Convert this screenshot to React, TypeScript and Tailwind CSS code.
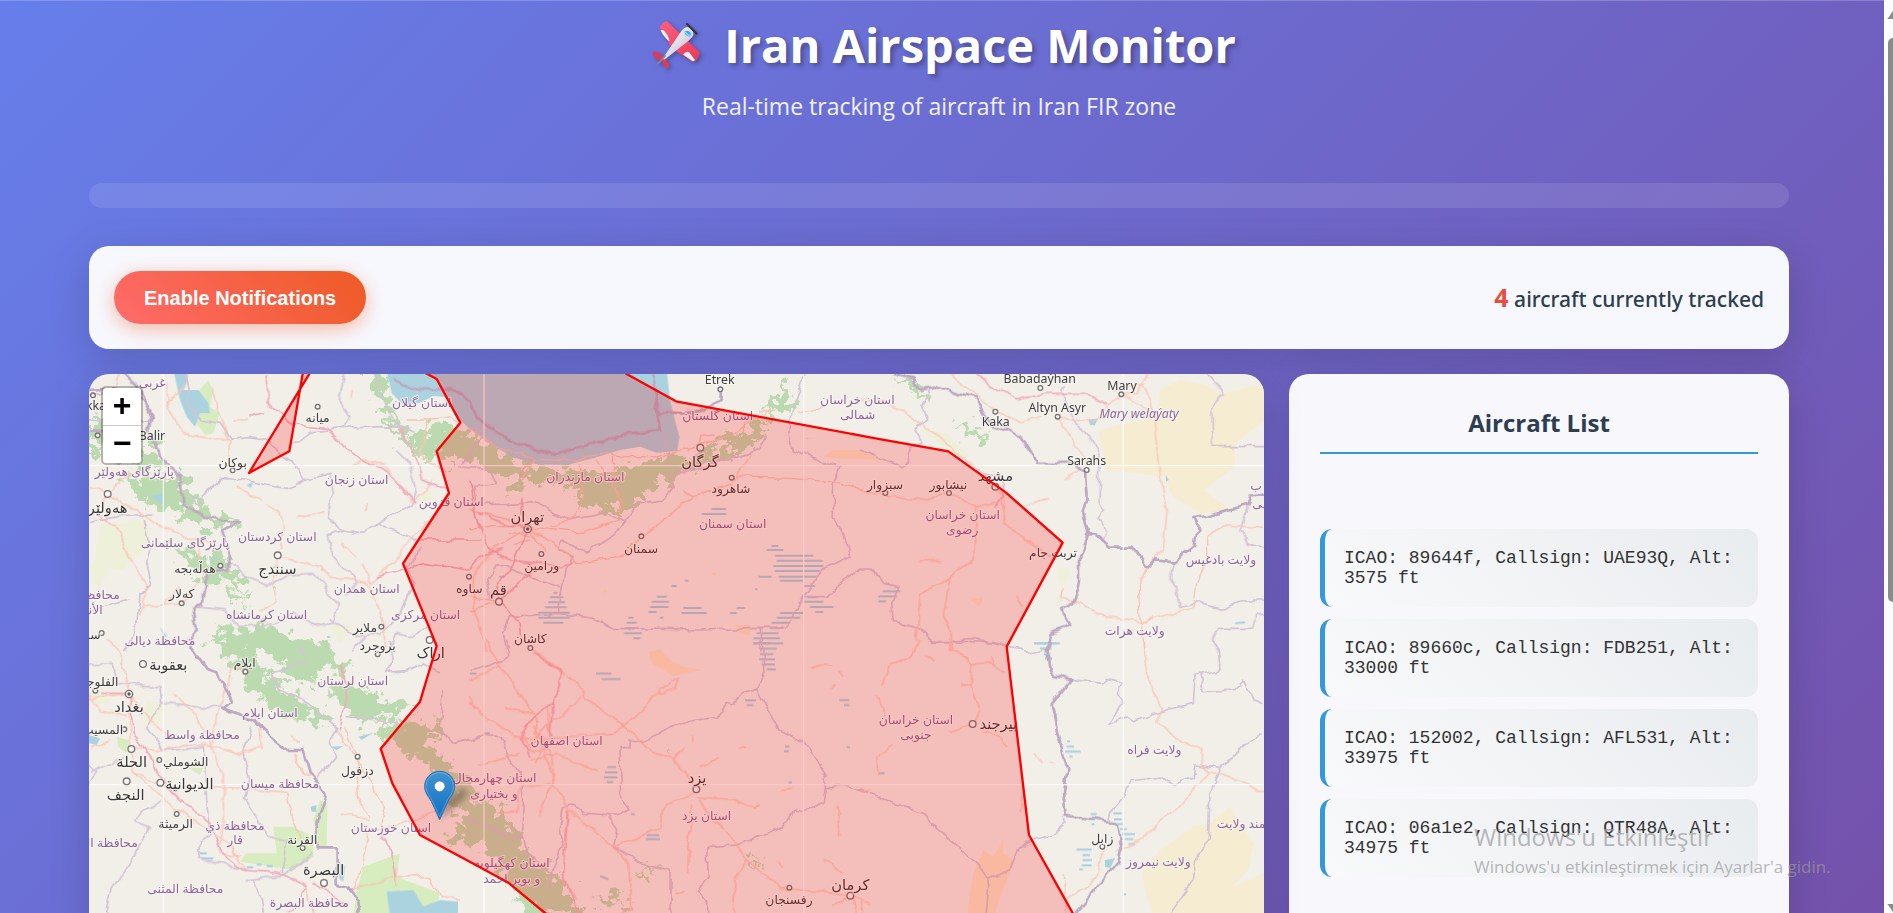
import React from "react";

type Sheet = "nw" | "sw" | "n" | "s" | "ne" | "se";
type Shape = [Sheet, string];
type Label = [Sheet, number, number, string];

/* The map is drawn as six survey sheets; each has its own origin. */
const ORIGIN: Record<Sheet, [number, number]> = {
  nw: [-27, -12],
  sw: [-27, 798],
  n: [1143, -12],
  s: [1143, 798],
  ne: [2313, -12],
  se: [2313, 798],
};

const WATER: Shape[] = [
  ["n", "M-250,0 L-235,70 -200,105 -150,98 -110,78 -65,82 -40,140 0,178 60,222 130,262 200,283 290,285 370,265 450,240 510,230 560,248 622,243 628,200 612,140 600,90 590,0Z"],
  ["nw", "M280,0 L325,0 320,40 310,60 355,60 385,100 390,130 360,130 345,170 320,140 300,90Z"],
  ["nw", "M212,378 L250,370 250,405Z M395,565 L410,560 400,578Z M240,770 L262,800 250,800Z M500,345 L520,335 512,355Z"],
  ["sw", "M27,285 L60,295 50,315 27,310Z M692,500 L710,495 708,515 695,515Z M750,320 L790,318 770,330Z M835,290 L880,278 845,300Z M315,240 L340,245Z"],
  ["sw", "M920,755 L1000,750 1030,800 1080,780 1135,785 1135,830 930,830Z M780,670 L795,680 790,725 778,715Z"],
  ["ne", "M685,148 L712,146 705,166 690,165Z M918,315 L926,330 918,335Z"],
  ["se", "M735,660 L765,655 750,685 735,680Z"],
];

const FOREST: Shape[] = [
  ["nw", "M860,0 L915,0 925,80 940,140 985,200 1060,160 1130,170 1200,200 1200,270 1130,275 1070,250 1040,262 1010,255 985,230 930,160 890,90Z"],
  ["n", "M-60,195 L0,205 60,235 130,270 200,290 290,292 360,300 460,300 520,270 640,262 740,230 800,205 860,160 910,150 870,195 830,235 740,265 680,290 590,330 540,365 500,400 450,435 400,415 310,390 320,360 220,325 130,360 120,320 50,300 20,250Z"],
  ["n", "M870,130 L900,110 910,80 950,50 960,90 975,120 940,140Z M905,75 L930,65 940,75Z"],
  ["ne", "M110,20 L160,30 190,70 210,110 180,90 150,50Z M290,160 L330,170 400,205 350,200 310,190Z"],
  ["nw", "M130,318 L200,330 290,318 350,370 370,420 480,455 430,480 340,465 270,420 200,400 150,355Z"],
  ["nw", "M270,520 L330,535 370,575 420,540 455,580 440,615 390,640 350,600 300,560Z M410,600 L470,610 510,665 480,660Z M440,660 L480,680 500,720 460,700Z"],
  ["nw", "M420,770 L560,770 640,800 750,810 750,850 440,850Z M560,620 L590,610 580,640Z"],
  ["nw", "M27,150 L90,135 110,200 150,240 240,260 250,290 200,310 100,250 27,235Z M190,200 L240,190 230,240Z"],
  ["sw", "M380,0 L460,10 540,60 560,110 630,160 760,230 750,255 680,235 640,245 570,190 500,130 450,60Z"],
  ["sw", "M570,0 L680,5 740,20 800,70 835,95 780,110 730,80 690,130 600,95Z"],
  ["sw", "M730,130 L800,150 870,150 990,205 960,235 900,225 870,250 820,225 770,180Z"],
  ["sw", "M880,245 L960,250 1060,235 1080,290 1030,285 1110,370 1180,440 1200,500 1240,620 1110,610 1100,580 1160,560 1100,450 1050,380 940,310Z"],
  ["s", "M0,480 L80,490 110,560 140,570 160,640 260,700 300,760 330,830 200,830 120,740 60,650 0,600Z M590,310 L615,330 600,330Z M830,640 L870,680 860,685Z M370,770 L430,760 480,800 400,790Z M500,680 L550,685 560,695 520,695Z"],
];

const MEADOW: Shape[] = [
  ["nw", "M350,70 L385,30 400,60 390,110 420,130 400,190 375,195 350,160Z"],
  ["sw", "M720,480 L742,490 740,620 715,620 700,540Z M580,560 L640,560 700,590 700,650 640,690 480,665 500,640 590,640Z M850,680 L960,640 950,710 1080,760 1060,830 820,830 830,750Z M320,380 L370,385 360,405Z M110,290 L145,300 140,340 115,320Z"],
];

const FARM: Shape[] = [
  ["nw", "M60,470 L200,450 210,520 130,600 40,590Z M30,580 L90,600 60,650 30,640Z M740,760 L820,770 780,820Z M1010,380 L1060,360 1050,420Z"],
  ["sw", "M200,180 L250,190 240,250 190,260Z M27,150 L100,170 80,190 27,190Z"],
  ["ne", "M590,590 L630,600 620,640 600,640Z M180,180 L260,190 330,260 300,260Z M590,670 L610,690 590,710Z"],
];

const DESERT: Shape[] = [
  ["ne", "M900,60 L960,30 1040,45 1080,70 1230,40 1230,140 1125,220 1125,290 1030,360 1120,425 1020,430 940,380 910,320 740,300 715,180 890,140Z"],
  ["se", "M845,700 L900,630 1000,560 1050,550 1110,500 1140,550 1180,610 1165,690 1120,740 1230,690 1230,830 885,830 860,770Z"],
];

const SAND: Shape[] = [
  ["s", "M535,35 L570,28 600,60 640,80 700,90 610,108 545,70Z"],
  ["se", "M370,630 L400,650 430,600 430,640 460,660 440,720 400,830 320,830 340,700Z"],
  ["n", "M795,765 L840,765 840,795 800,790Z M720,610 L738,608 735,620Z M400,660 L412,662 405,672Z M1060,260 L1090,240 1160,240 1250,270 1090,265Z"],
  ["ne", "M330,690 L370,680 360,710Z"],
];

const SALT: Shape[] = [
  ["n", "M725,417H768M695,432H768M890,540H940M905,528H925M915,557H1030M920,572H1058M910,588H1060M915,603H1050M865,620H905M925,620H1040M930,632H1000M1000,648H1035M560,680H590M545,695H597M540,711H595M535,726H560M640,714H695M635,729H710M780,729H800M800,714H825M88,620H104M250,668H262M240,682H280M235,697H285M225,712H290M205,728H300M205,743H300M220,758H280M475,743H490M470,758H500M465,774H505M462,790H515M490,805H512M930,729H1000M920,743H990M905,758H960M900,774H940M860,790H925M850,805H930M850,820H900M1010,682H1040M1000,695H1060M1020,711H1090M1035,726H1060M855,658H862M605,648H620M645,632H655M570,743H580"],
  ["s", "M850,10H940M870,26H920M870,42H910M868,58H915M875,73H915M890,88H918M378,101H425M395,117H452M825,181H858M830,195H850M1108,180H1138M1122,195H1138M412,381H438M405,397H442M402,412H442M410,426H430M530,585H568M528,597H570M945,320H958M942,334H956M483,522H494M955,428H966M1130,321H1140M390,708L415,718M40,280H60M0,101H20"],
  ["ne", "M68,664H120M55,679H110M55,694H78M525,820H600M1125,760L1155,757"],
  ["se", "M522,10H590M540,26H575M552,42H570M555,56H575M622,304H630M620,320H642M615,335H662M628,350H638M692,522H710M688,538H705M695,553H703M760,520H785M762,538H785M760,552H790M780,567H800M785,582H825M795,597H820M805,612H825M650,629H695M668,645H690M668,660H696M665,676H695M658,688H668M57,399H74M790,763H798"],
  ["sw", "M360,640H380M365,655H400M500,682H520M560,678H578M530,674H545"],
];

const BORDER: Shape[] = [
  ["nw", "M120,0 L170,50 215,140 205,180 225,235 265,285 300,320 310,400 370,440 480,455 425,485 455,560 440,600 380,610 380,650 370,705 340,712 350,780 325,815"],
  ["nw", "M27,60 L100,55 150,70 190,95 215,150 M27,180 L80,185"],
  ["sw", "M325,10 L380,90 415,100 455,185 430,205 520,240 560,280 620,330 670,330 690,400 740,465 710,540 710,625 770,625 770,730 800,740 835,785 840,830"],
  ["n", "M-230,20 L-190,50 -120,60 -60,55 0,90 20,140 60,175 130,215 200,240 260,250 370,220 420,210 480,190 570,180 560,110 545,0 M565,125 L640,130 700,120 755,90 755,60"],
  ["ne", "M100,12 L160,25 180,60 220,50 350,85 370,130 400,170 440,175 485,200 530,278 640,278 675,310 680,380 668,420 685,490 660,560 660,640 640,700 600,720 625,765 570,790 560,850"],
  ["ne", "M685,490 L705,490 750,530 820,530 865,590 890,568 940,575 1000,530 1005,500 1025,480 1005,445 1080,425 1165,405 1175,380 1225,370"],
  ["se", "M562,0 L570,75 585,108 630,118 575,190 595,290 622,385 612,460 620,530 770,550 785,630 775,665 640,830"],
];

const PROVINCE: Shape[] = [
  ["nw", "M315,12 L330,100 360,150 420,160 450,205 510,200 570,210 600,260 640,280 670,330 620,355 550,345 500,330 420,325 350,400 330,380"],
  ["nw", "M790,12 L775,90 810,140 790,175 700,185 640,220 625,240 M790,175 L900,170 960,175 1010,190 M960,175 L910,100 885,12"],
  ["nw", "M670,330 L750,310 760,370 740,440 790,480 850,490 890,465 1000,400 1010,360 990,280 950,240 M890,465 L950,480 1010,510 1000,540 M790,480 L745,500 760,560 800,600 830,640 800,670"],
  ["nw", "M455,580 L500,620 560,650 620,615 700,610 730,640 750,680 775,700 760,760 700,770 640,720 590,760 480,770 430,720 350,710"],
  ["nw", "M27,150 L120,160 215,150 M27,460 L130,440 220,435 M190,450 L210,530 200,580 215,640 180,680 170,760 160,800 130,840 M27,720 L150,690 M27,80 L90,60"],
  ["nw", "M750,750 L830,800 900,790 960,730 1000,640 980,590 1030,530 M820,840 L860,800 M930,840 L950,790 990,800 1050,760"],
  ["sw", "M27,75 L100,70 110,130 240,140 245,190 340,200 430,200 M245,190 L200,260 250,330 370,320 380,480 390,590 360,610 360,655 500,690 M515,255 L490,340 510,420 490,470 560,590 620,600 610,700 M27,430 L50,400 27,370 M30,400 L130,350"],
  ["sw", "M240,480 L160,540 210,560 130,700 95,740 75,819 M520,720 L545,780 550,819 M500,720 L610,705 700,640"],
  ["sw", "M570,100 L630,90 680,60 660,20 M570,100 L600,150 680,190 770,260 750,300 770,350 710,415 M800,230 L900,240 960,250 M930,0 L940,60 920,100 980,95 1030,70 1080,100 M1090,150 L1080,270 1120,310 1200,290"],
  ["n", "M0,180 L50,175 -30,290 60,300 80,340 10,350 20,400 110,400 200,395 250,430 300,450 400,430 470,450 440,490 350,550 310,530 275,510 265,540 310,560 285,600 265,730 M80,580 L180,620 270,650 M80,580 L50,630 60,690 M265,730 L120,740 100,790 110,840 M265,730 L370,745 430,775 680,780 870,775 945,775 1000,680 1060,600 1140,560 1120,490 1090,440 1090,340 1110,290 1060,275 970,240 960,190 965,130 1005,12"],
  ["n", "M595,265 L590,190 M600,320 L700,290 870,235 890,190 M600,320 L610,350 580,390 540,395 500,405 460,460 M875,775 L873,840 M1000,680 L1070,680 1110,640 1170,600"],
  ["s", "M880,0 L885,100 860,148 930,270 1000,305 1070,405 1060,485 1000,515 970,510 940,560 800,615 710,620 715,710 685,750 710,780 710,830 M860,148 L820,160 790,195 770,190 740,230 660,240 520,305 480,300 480,320 450,320 455,470 480,510 440,525 340,520 310,495 280,500 270,560 280,620 240,700 240,750 M415,525 L440,570 430,620 520,670 600,690 600,790 610,830"],
  ["s", "M0,300 L30,285 90,290 110,350 150,400 160,480 155,580 170,640 240,700 M110,0 L120,50 60,80 0,95 M0,540 L60,560 110,590 160,590 M1065,440 L1130,440 1190,460"],
  ["ne", "M205,60 L185,110 200,150 165,180 185,215 150,230 145,280 125,290 0,240 M0,600 L40,600 65,640 120,650 95,700 100,755 175,770 220,815 340,805 440,830"],
  ["ne", "M620,50 L605,60 640,150 690,200 720,260 717,400 730,420 710,445 740,480 730,510 M1040,12 L1093,75 1055,120 1060,230 1225,230 M940,575 L930,620 950,650 960,710 1010,695 1090,715 1150,690 1225,690 M1165,410 L1140,480 1160,520 1225,530 M1225,730 L1190,735 1180,775 1070,775 1055,810 1075,850"],
  ["se", "M210,0 L400,8 440,20 485,25 495,40 560,30 M630,118 L720,130 740,115 790,128 770,160 785,190 745,250 800,230 820,245 920,210 1000,190 1005,105 1080,90 1075,30 1055,0 M1020,105 L1030,155 1120,150 1150,120 1180,180 1212,195 M1212,280 L1150,320 1080,385 1005,375 1000,410 940,435 905,408 810,420 795,470 755,515 750,545 M1080,385 L1050,460 1045,600 1010,640 1000,720 930,819 M0,450 L90,485 190,520 230,565 350,670 385,718 375,830 M385,718 L450,690 475,625 520,600 580,580 615,550 612,530"],
];

const TRUNK: Shape[] = [
  ["nw", "M320,40 L260,100 310,190 400,210 450,210 450,270 M400,50 L410,110 430,160 440,210 M460,150 L500,150 M260,40 L265,110 M470,350 L540,390 M560,400 L600,430 610,470 600,540 M660,445 L730,425 M820,290 L850,265 920,290 980,370 1000,400 1060,330 M860,400 V425"],
  ["nw", "M595,560 L720,590 740,615 M595,560 L580,640 590,700 545,720 M780,520 L830,560 M850,580 L870,640 950,570 1000,490 1060,450 M860,640 L740,620 M860,640 L910,750 920,830 M720,600 L745,615 M250,700 L300,650"],
  ["nw", "M150,320 L100,345 83,370 150,410 210,450 250,470 310,500 400,520 M83,370 L60,440 120,480 140,540 200,640 180,740 M83,370 L30,350 M350,510 L370,610 310,700 190,710 M120,0 L100,90 40,110 M815,60 L810,80"],
  ["nw", "M1040,150 L980,150 M1040,150 L1110,140 1140,160 M1040,150 L1020,250 1100,310 M1110,370 L1080,350"],
  ["sw", "M147,160 L120,40 80,0 M147,160 L200,230 280,300 M27,175 L147,160 150,300 160,400 280,500 370,560 450,610 M90,300 L30,330 M150,320 L250,330 320,310 395,320 480,340 545,320 M395,320 L430,400 430,540 420,640 480,650 M280,160 L350,230 395,320 420,200 455,80 500,95 M160,400 L250,440 380,440 500,450 620,460 M540,260 L545,330 M30,160 L60,210 140,230"],
  ["sw", "M620,460 L640,540 665,600 M630,290 L660,310 M640,340 L670,400 700,410 M680,740 L700,819 M790,260 L830,350 835,470 870,530 M770,270 L870,420 910,500 900,550 M780,520 L870,540 M870,580 L850,680 815,750 950,710 1050,710 1080,770 1140,780 M950,680 L950,740 M860,560 L870,580 1080,510 M450,610 L460,640 500,690"],
  ["n", "M0,178 L100,240 200,265 320,270 400,250 470,260 560,260 690,225 780,200 830,160 920,115 M200,265 L155,330 M330,280 L340,380 320,440 250,470 M430,260 L430,350 460,400 440,440 M380,270 L400,310 M690,230 L695,200 730,195 M870,120 L900,130 M820,155 V190"],
  ["n", "M0,470 L173,470 340,490 450,445 M173,470 L260,530 320,575 450,560 514,499 670,380 785,345 840,250 M785,320 L960,325 1080,335 1200,365 M173,477 L60,545 10,620 10,720 50,840 M173,477 L120,450 0,420 M173,477 L230,540 M87,695 L0,720 M0,680 L87,695 M640,355 L670,380 M1010,205 L1030,205 M985,130 L1060,110 M120,490 L200,500 M130,520 L180,510"],
  ["s", "M50,0 L90,80 190,220 250,430 300,510 430,620 480,670 485,800 450,830 M180,25 L280,95 340,150 350,180 460,255 550,335 610,360 679,448 M0,120 L90,80 M0,190 L130,290 200,300 350,285 430,280 460,255 570,155 M340,170 L250,240 190,300 M190,220 L100,205 M570,150 L625,115 615,145 575,160Z M150,340 L50,370 20,370 M180,360 L260,340 380,395 M0,170 L20,215"],
  ["s", "M679,448 L620,485 580,500 570,560 490,600 430,620 M679,470 L800,480 850,505 870,490 M690,470 L720,530 780,590 830,655 930,745 1050,755 1141,767 1200,790 M665,500 L655,640 653,700 M830,655 L795,720 790,819 M610,360 L640,320 M670,285 L665,305 M690,380 L745,350 M800,330 L830,320 M1020,85 L1050,75 1090,78 M1080,145 L1095,130 M930,455 L965,450 M1105,500 L1100,585 M1060,655 L1120,700 M250,430 L150,445 M250,430 L205,530 M300,510 L280,620 M280,720 L320,780 M615,763 H645 M1141,767 L1090,800 M1141,767 L1160,819"],
  ["s", "M190,230 L160,280 180,330 240,330 250,430 M230,190 L240,290 M190,260 L220,290 200,370 M200,240 V300 M80,520 L140,515 150,450 M1105,95 L1120,110 M930,660 L940,680"],
  ["ne", "M0,90 L80,95 180,160 240,200 300,260 380,320 430,380 430,460 570,560 M0,360 L150,390 190,390 265,370 350,410 410,400 M350,410 L345,570 270,620 180,670 170,819 M270,620 L250,740 270,780 275,850 M265,0 L350,80 410,125 480,155 540,140 M593,140 L660,155 720,140 784,73 830,70 870,0 M784,73 L880,130 895,280 920,430 910,540 880,570 M593,140 L680,280 620,330 M760,60 L850,40 890,150 M500,405 L560,385 M180,572 H240 M470,680 L490,710"],
  ["ne", "M610,655 L605,680 740,740 850,755 1000,710 1010,640 1040,560 M880,570 L835,650 840,740 850,755 855,850 M1040,560 L1040,500 1100,465 1160,470 1212,475 M850,755 L880,740"],
  ["se", "M180,0 L150,50 95,70 62,135 M270,0 L280,35 340,72 390,68 440,95 M335,72 L330,140 350,190 352,260 338,252 M300,130 L330,138 M338,252 L270,275 M370,270 L430,295 440,315 M50,165 L75,200 75,230 M98,310 L50,355 55,405 M0,455 L35,450 M195,45 L220,60 M390,50 L398,70 M480,465 L485,520 M852,0 L865,120 905,210 890,245 950,300 1022,320 1020,375 1050,395 1150,425 1212,455 M1050,395 L1000,450 930,520 840,600 770,640 M727,625 L710,700 680,740 620,780 M610,700 L620,819 M525,340 L550,368 M575,368 L585,374 M0,780 L10,810"],
];

const MOTORWAY: Shape[] = [
  ["nw", "M555,12 L570,110 640,165 740,175 800,235 850,270 920,300 980,370 1010,400 M505,140 L555,128 M960,180 L1010,270 1025,330 1100,360 M890,620 L960,600 M960,600 L1030,580 1170,600 M1020,510 L1200,510"],
  ["sw", "M790,80 L800,180 775,265 M60,160 L147,160 160,280 220,360 240,410 300,480 390,550 430,640 490,690 600,700 680,740 660,790 620,819 M900,590 L920,600 940,660 950,720 M700,730 L790,790"],
  ["n", "M30,430 L110,465 173,477 M173,477 L120,600 80,640 87,695 M87,695 L190,600 173,580 M87,695 L150,760 155,800 M0,600 L30,560 100,540 M0,330 L20,440 60,540 120,570 270,590 310,575 M155,310 L180,265 M155,380 L160,440"],
  ["s", "M190,40 L275,95 270,140 250,180 240,290 M250,185 L180,240 155,295 180,350 M295,510 L290,600 280,700 300,760 330,819"],
  ["ne", "M350,12 L400,55 470,90 560,70 670,70 745,105 M370,310 L420,320 430,380 410,410"],
];

const PROVINCE_LABELS: Label[] = [
  ["nw", 217, 37, "غربی"], ["nw", 163, 305, "پارێزگای هەولێر"], ["nw", 830, 328, "استان زنجان"],
  ["nw", 1114, 395, "استان قزوین"], ["nw", 592, 500, "استان کردستان"], ["nw", 315, 518, "پارێزگای سلێمانی"],
  ["nw", 860, 655, "استان همدان"], ["nw", 560, 733, "استان کرمانشاه"], ["nw", 1037, 733, "استان مرکزی"],
  ["nw", 240, 812, "محافظة ديالى"], ["nw", 58, 675, "محافظة"], ["nw", 27, 718, "الأنبار"], ["nw", 1025, 97, "استان گیلان"],
  ["sw", 818, 121, "استان لرستان"], ["sw", 570, 218, "استان ایلام"], ["sw", 366, 284, "محافظة واسط"],
  ["sw", 600, 432, "محافظة ميسان"], ["sw", 465, 556, "محافظة ذي"], ["sw", 465, 600, "قار"],
  ["sw", 933, 562, "استان خوزستان"], ["sw", 316, 746, "محافظة المثنى"], ["sw", 688, 788, "محافظة البصرة"],
  ["sw", 60, 607, "محافظة النجف"],
  ["n", 743, 137, "استان گلستان"], ["n", 1162, 90, "استان خراسان"], ["n", 1163, 135, "شمالی"],
  ["n", 346, 321, "استان مازندران"], ["n", 788, 460, "استان سمنان"],
  ["s", 290, 302, "استان اصفهان"], ["s", 74, 414, "استان چهارمحال"], ["s", 72, 461, "و بختیاری"],
  ["s", 710, 528, "استان یزد"], ["s", 125, 669, "استان کهگیلویه"], ["s", 125, 716, "و بویر احمد"],
  ["ne", 308, 433, "استان خراسان"], ["ne", 307, 480, "رضوی"], ["ne", 1083, 570, "ولایت بادغیس"],
  ["ne", 824, 781, "ولایت هرات"], ["ne", 1200, 348, "ب /"], ["ne", 1208, 400, "سی"],
  ["se", 168, 238, "استان خراسان"], ["se", 168, 284, "جنوبی"], ["se", 883, 329, "ولایت فراه"],
  ["se", 895, 665, "ولایت نیمروز"], ["se", 1160, 550, "هلمند ولایت"],
];

const TOWN_LABELS: Label[] = [
  ["nw", 713, 142, "ميانه"], ["nw", 458, 278, "بوکان"], ["nw", 345, 596, "هەڵەبجە"], ["nw", 305, 672, "کەلار"],
  ["nw", 855, 773, "ملایر"], ["nw", 893, 827, "بروجرد"], ["nw", 36, 795, "سر"], ["nw", 1168, 655, "ساوه"],
  ["nw", 48, 108, "kka"], ["nw", 216, 196, "Balir"],
  ["sw", 494, 68, "ایلام"], ["sw", 58, 125, "الفلوجة"], ["sw", 68, 270, "المسيب"], ["sw", 317, 364, "الشوملي"],
  ["sw", 287, 552, "الرميثة"], ["sw", 667, 598, "القرنة"], ["sw", 832, 392, "دزفول"],
  ["n", 749, 30, "Etrek"], ["n", 783, 357, "شاهرود"], ["n", 513, 535, "سمنان"], ["n", 215, 586, "ورامین"], ["n", 181, 806, "کاشان"],
  ["s", 957, 779, "رفسنجان"],
  ["ne", 539, 25, "Babadaýhan"], ["ne", 786, 46, "Mary"], ["ne", 592, 112, "Altyn Asyr"], ["ne", 407, 155, "Kaka"],
  ["ne", 680, 273, "Sarahs"], ["ne", 75, 344, "سبزوار"], ["ne", 265, 344, "نیشابور"], ["ne", 579, 547, "تربت جام"],
  ["se", 727, 597, "زابل"],
];

const CITY_LABELS: Label[] = [
  ["nw", 83, 415, "هەولێر"], ["nw", 592, 600, "سنندج"], ["sw", 265, 76, "بعقوبة"], ["sw", 147, 203, "بغداد"],
  ["sw", 155, 368, "الحلة"], ["sw", 328, 433, "الديوانية"], ["sw", 137, 466, "النجف"], ["sw", 731, 693, "البصرة"],
  ["sw", 1052, 42, "اراک"], ["n", 690, 278, "گرگان"], ["n", 172, 443, "تهران"], ["n", 85, 663, "قم"],
  ["s", 681, 415, "یزد"], ["s", 1141, 736, "کرمان"], ["ne", 406, 320, "مشهد"], ["se", 415, 255, "بیرجند"],
];

const TOWN_DOTS: [Sheet, number, number][] = [
  ["nw", 713, 110], ["nw", 458, 301], ["nw", 421, 587], ["nw", 305, 700], ["nw", 904, 770], ["nw", 39, 76], ["nw", 53, 196],
  ["nw", 65, 789], ["nw", 1167, 620], ["sw", 893, 43], ["sw", 496, 95], ["sw", 46, 152], ["sw", 133, 268], ["sw", 238, 360],
  ["sw", 290, 522], ["sw", 668, 624], ["sw", 833, 350], ["n", 751, 58], ["n", 785, 323], ["n", 514, 499], ["n", 214, 552],
  ["n", 181, 834], ["s", 958, 743], ["ne", 541, 54], ["ne", 784, 73], ["ne", 593, 140], ["ne", 406, 125], ["ne", 680, 300],
  ["ne", 76, 369], ["ne", 267, 369], ["se", 727, 620],
];

const CITY_DOTS: [Sheet, number, number][] = [
  ["nw", 83, 372], ["nw", 593, 556], ["sw", 189, 72], ["sw", 154, 327], ["sw", 140, 424], ["sw", 241, 428], ["sw", 732, 729],
  ["sw", 1049, 0], ["n", 691, 233], ["n", 87, 695], ["s", 679, 448], ["s", 1141, 767], ["ne", 406, 350], ["se", 338, 252],
];

const CAPITALS: [Sheet, number, number][] = [["sw", 147, 162], ["n", 173, 477]];

function Shapes({ items }: { items: Shape[] }) {
  return (
    <>
      {items.map(([sheet, d], i) => (
        <path key={i} d={d} transform={`translate(${ORIGIN[sheet].join(" ")})`} />
      ))}
    </>
  );
}

function Labels({ items }: { items: Label[] }) {
  return (
    <>
      {items.map(([sheet, x, y, text], i) => (
        <text key={i} x={ORIGIN[sheet][0] + x} y={ORIGIN[sheet][1] + y + 13}>
          {text}
        </text>
      ))}
    </>
  );
}

function Dots({ items, r }: { items: [Sheet, number, number][]; r: number }) {
  return (
    <>
      {items.map(([sheet, x, y], i) => (
        <circle key={i} cx={ORIGIN[sheet][0] + x} cy={ORIGIN[sheet][1] + y} r={r} />
      ))}
    </>
  );
}

function AirspaceMap() {
  return (
    <svg
      viewBox="0 0 3525 2250"
      preserveAspectRatio="xMidYMin slice"
      className="block h-full w-full bg-[#f2efe9]"
      role="img"
      aria-label="Map of the Iran FIR zone"
    >
      <defs>
        <filter id="ragged" x="0" y="0" width="3525" height="2250" filterUnits="userSpaceOnUse">
          <feTurbulence type="fractalNoise" baseFrequency="0.03" numOctaves="4" seed="4" />
          <feDisplacementMap in="SourceGraphic" scale="110" xChannelSelector="R" yChannelSelector="G" />
        </filter>
        <filter id="winding" x="0" y="0" width="3525" height="2250" filterUnits="userSpaceOnUse">
          <feTurbulence type="fractalNoise" baseFrequency="0.022" numOctaves="2" seed="9" />
          <feDisplacementMap in="SourceGraphic" scale="24" xChannelSelector="R" yChannelSelector="G" />
        </filter>
        <linearGradient id="pin" x1="0" y1="0" x2="0" y2="1">
          <stop offset="0" stopColor="#3f93cf" />
          <stop offset="1" stopColor="#126fc6" />
        </linearGradient>
        <filter id="pinShadow" x="-50%" y="-50%" width="200%" height="200%">
          <feGaussianBlur stdDeviation="9" />
        </filter>
      </defs>

      <g fill="#eff0da"><Shapes items={FARM} /></g>
      <g fill="#f6ecd1"><Shapes items={DESERT} /></g>
      <g fill="#f8e8c8"><Shapes items={SAND} /></g>
      <g fill="#d7edbf"><Shapes items={MEADOW} /></g>
      <g fill="#bcdab0" filter="url(#ragged)"><Shapes items={FOREST} /></g>
      <g fill="#aad3df"><Shapes items={WATER} /></g>
      <g fill="none" stroke="#a6cfe0" strokeWidth="6"><Shapes items={SALT} /></g>

      <g fill="none" strokeLinejoin="round" filter="url(#winding)">
        <g stroke="#d3c4d6" strokeWidth="5"><Shapes items={PROVINCE} /></g>
        <g stroke="#fcc4b5" strokeWidth="4"><Shapes items={TRUNK} /></g>
        <g stroke="#f2abbb" strokeWidth="5"><Shapes items={MOTORWAY} /></g>
        <g stroke="#bda9c2" strokeWidth="8"><Shapes items={BORDER} /></g>
      </g>

      <path
        d="M223,0V1617 M1185,0V1900 M2144,0V1900 M3103,0V1900 M0,275H3525 M0,1232H3525"
        stroke="#fff"
        strokeWidth="4"
        strokeOpacity="0.8"
      />

      <g fill="#f8f6f2" stroke="#77716f" strokeWidth="4">
        <Dots items={TOWN_DOTS} r={7} />
        <Dots items={CITY_DOTS} r={10} />
        <Dots items={CAPITALS} r={11} />
      </g>
      <g fill="#5a5452"><Dots items={CAPITALS} r={5} /></g>

      <g
        textAnchor="middle"
        fontFamily="'Noto Sans', 'DejaVu Sans', sans-serif"
        stroke="#f7f5f1"
        strokeOpacity="0.75"
        strokeWidth="7"
        strokeLinejoin="round"
        paintOrder="stroke"
      >
        <g fill="#8f6497" fontSize="37">
          <Labels items={PROVINCE_LABELS} />
          <text x="3150" y="132" fontStyle="italic">Mary welaýaty</text>
        </g>
        <g fill="#3f3c3c" fontSize="37"><Labels items={TOWN_LABELS} /></g>
        <g fill="#3a3737" fontSize="44"><Labels items={CITY_LABELS} /></g>
      </g>

      <g fill="#ff0000" fillOpacity="0.2" stroke="#ff0000" strokeWidth="7" strokeLinejoin="round">
        <path d="M643,-12 L601,232 480,297 668,-12Z" />
        <path d="M987,-15 L1015,0 1043,15 1114,146 1043,232 1080,357 942,569 1043,816 993,983 875,1124 910,1228 993,1383 1173,1480 1258,1526 1368,1617 1700,1900 2100,2300 3300,2300 3100,1880 2951,1617 2820,1383 2753,818 2921,506 2751,356 2578,232 2343,190 1761,82 1613,0 1590,-15Z" />
      </g>

      <g transform="translate(1005 1190)">
        <path d="M47,148 L120,85 Q140,60 118,50 L60,90Z" fill="#000" fillOpacity="0.28" filter="url(#pinShadow)" />
        <path
          d="M47,2 C21,2 2,22 2,47 C2,66 13,77 22,92 L47,147 L72,92 C81,77 92,66 92,47 C92,22 73,2 47,2Z"
          fill="url(#pin)"
          stroke="#2a6fa8"
          strokeWidth="3"
        />
        <path
          d="M47,6 C24,6 6,24 6,47 C6,64 16,75 25,90 L47,138 L69,90 C78,75 88,64 88,47 C88,24 70,6 47,6Z"
          fill="none"
          stroke="#fff"
          strokeOpacity="0.25"
          strokeWidth="3"
        />
        <circle cx="47" cy="47" r="16" fill="#fff" stroke="#2a78b8" strokeWidth="2" />
      </g>
    </svg>
  );
}

function PlaneIcon() {
  return (
    <svg viewBox="0 0 48 48" className="h-12 w-12 overflow-visible drop-shadow-[2px_2px_2px_rgba(0,0,0,0.3)]" aria-hidden="true">
      <defs>
        <linearGradient id="wing" x1="0" y1="0" x2="1" y2="1">
          <stop offset="0" stopColor="#fb5f7c" />
          <stop offset="1" stopColor="#e93a58" />
        </linearGradient>
        <linearGradient id="body" x1="0" y1="0" x2="1" y2="1">
          <stop offset="0.3" stopColor="#f1ecf6" />
          <stop offset="1" stopColor="#b9adc4" />
        </linearGradient>
      </defs>
      <path d="M7.5,6.5 Q8,5 13,0.6 Q15,-0.4 16.5,1.5 L47,30.5 Q48.5,32.5 47,35 L44,39.5 Q42,41.5 39.5,40 L22,29 Q17,24 14,17Z" fill="url(#wing)" />
      <path d="M8.5,9.5 L11,9 Q16,13 17.5,20 L15.5,19 Q10.5,14 8.5,9.5Z M31,33.5 Q34,30 37,31 L43,39 Q42,41 39.5,39.5Z" fill="#f4eff8" />
      <path d="M0.5,32.5 Q1,30 4,30.5 L9,33.5 L14.5,39 Q17,42 17,44.5 Q16.5,48 14.5,47.5 Q12,46 10,40.5 L3.5,37 Q0.5,35 0.5,32.5Z" fill="#dc3b5b" />
      <path d="M11,37 L28,12 Q32,5.5 36,6 Q42,8 41.5,14 Q40,17 35,21 L14,37.5 Q11,39.5 11,37Z" fill="url(#body)" />
      <path d="M13,35 L6,42.5" stroke="#8c8795" strokeWidth="1.8" strokeLinecap="round" />
      <path d="M35,3 L44.5,12.5" stroke="#35303d" strokeWidth="2.2" strokeLinecap="round" />
      <path d="M32.5,10.5 Q37,8.5 39,12.5 Q39,15 36.5,15.5 Q32.5,14 32.5,10.5Z" fill="#27b5ee" />
      <path d="M33,11 Q35,13 37.5,15" stroke="#8fe0fb" strokeWidth="1.2" fill="none" />
    </svg>
  );
}

const AIRCRAFT = [
  { icao: "89644f", callsign: "UAE93Q", alt: 3575 },
  { icao: "89660c", callsign: "FDB251", alt: 33000 },
  { icao: "152002", callsign: "AFL531", alt: 33975 },
  { icao: "06a1e2", callsign: "QTR48A", alt: 34975 },
];

export default function App() {
  return (
    <div className="flex h-screen overflow-hidden font-['Open_Sans','Noto_Sans',sans-serif]">
      <div className="relative min-w-0 flex-1 overflow-hidden">
        <div className="border-t border-white/20 bg-[linear-gradient(135deg,#667eea_0%,#764ba2_100%)] bg-origin-border pr-1.5 pb-48">
          <div className="mx-auto w-full max-w-[1700px]">
            <header className="flex flex-col items-center pt-2 text-white">
              <h1 className="flex h-[72px] items-center gap-6 pl-2.5 text-[47px] font-bold [text-shadow:3px_3px_5px_rgba(0,0,0,0.3)]">
                <PlaneIcon />
                Iran Airspace Monitor
              </h1>
              <p className="mt-[9px] text-[23px] leading-8 text-white/90">Real-time tracking of aircraft in Iran FIR zone</p>
            </header>

            <div className="mt-[61px] h-[25px] rounded-full bg-white/10" />

            <section className="mt-[38px] flex h-[103px] items-center justify-between rounded-[20px] bg-[#f7f8fd] px-[25px] shadow-[0_10px_40px_rgba(0,0,0,0.15)]">
              <button
                type="button"
                className="h-[53px] rounded-full bg-[linear-gradient(45deg,#ff6b6b,#ee5a24)] px-[30px] font-['Liberation_Sans',Arial,sans-serif] text-[20px] font-bold text-white shadow-[0_5px_19px_rgba(238,90,36,0.4)]"
              >
                Enable Notifications
              </button>
              <p className="font-['Noto_Sans',sans-serif] text-[21px] font-medium text-[#2c3e50]">
                <span className="text-[25px] font-bold text-[#e74c3c]">4</span> aircraft currently tracked
              </p>
            </section>

            <main className="mt-[25px] grid grid-cols-[minmax(0,1fr)_500px] gap-[25px]">
              <section className="relative h-[750px] overflow-hidden rounded-[20px] shadow-[0_10px_40px_rgba(0,0,0,0.15)]">
                <AirspaceMap />
                <div className="absolute top-3 left-3 flex flex-col overflow-hidden rounded-[5px] border-2 border-black/25 bg-white bg-clip-padding font-['Liberation_Mono',monospace] text-[32px] leading-10 font-bold text-black">
                  <button type="button" aria-label="Zoom in" className="h-[38px] w-[38px] border-b border-[#ccc]">+</button>
                  <button type="button" aria-label="Zoom out" className="h-[37px] w-[38px]">−</button>
                </div>
              </section>

              <aside className="rounded-[20px] bg-[#f8f7fc] px-[31px] pt-[31px] shadow-[0_10px_40px_rgba(0,0,0,0.15)]">
                <h2 className="h-[49px] border-b-2 border-[#3498db] text-center text-[24px] leading-9 font-bold text-[#2c3e50]">
                  Aircraft List
                </h2>
                <ul className="mt-[75px] flex flex-col gap-3">
                  {AIRCRAFT.map((a) => (
                    <li
                      key={a.icao}
                      className="rounded-[12px] border-l-[5px] border-[#3498db] bg-[linear-gradient(45deg,#f8f9fa,#e9ecef)] px-[19px] py-[19px] font-['Liberation_Mono','Courier_New',monospace] text-[18px] leading-5 text-[#333]"
                    >
                      ICAO: {a.icao}, Callsign: {a.callsign}, Alt: {a.alt} ft
                    </li>
                  ))}
                </ul>
              </aside>
            </main>
          </div>
        </div>

        <div className="pointer-events-none absolute right-14 bottom-[34px] w-[354px] text-[#999]/70">
          <p className="text-[24px] leading-9">Windows'u Etkinleştir</p>
          <p className="text-[17px] leading-6 whitespace-nowrap">Windows'u etkinleştirmek için Ayarlar'a gidin.</p>
        </div>
      </div>

      <div className="flex w-[9px] shrink-0 flex-col overflow-hidden bg-[#fcfcfc]" aria-hidden="true">
        <svg viewBox="0 0 9 38" className="h-[38px] w-[9px]">
          <path d="M3.5,19 L9,11 V19Z" fill="#8b8b8b" />
        </svg>
        <div className="ml-1 h-[564px] rounded-l-[6px] bg-[#8b8b8b]" />
        <svg viewBox="0 0 9 10" className="mt-auto h-[10px] w-[9px]">
          <path d="M3.5,1 H9 V9Z" fill="#8b8b8b" />
        </svg>
      </div>
    </div>
  );
}
